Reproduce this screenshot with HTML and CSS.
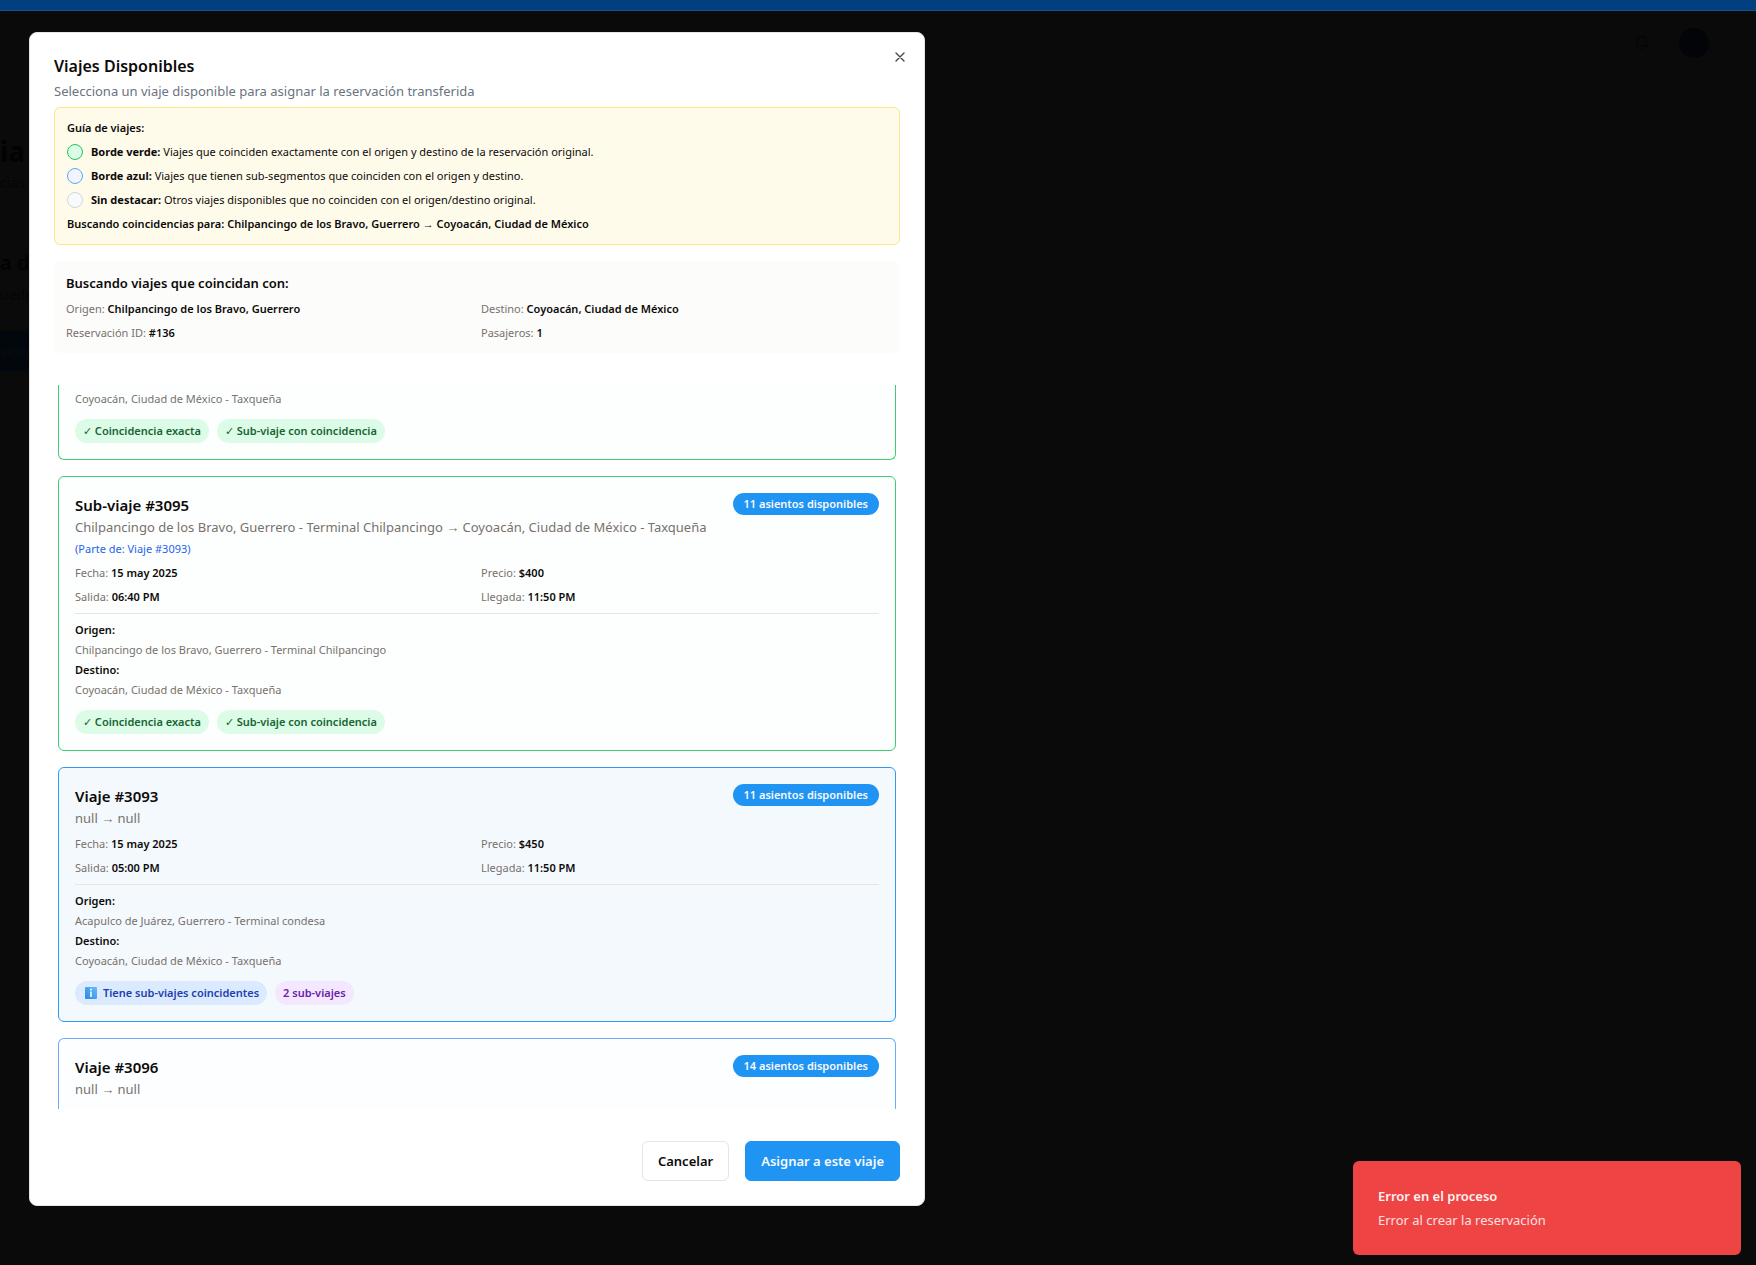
FILE: index.html
```html
<!DOCTYPE html>
<html lang="es">
<head>
<meta charset="utf-8">
<meta name="viewport" content="width=device-width, initial-scale=1">
<title>Viajes Disponibles</title>
<link rel="stylesheet" href="styles.css">
</head>
<body>
<div class="page">
  <div class="topbar"></div>
  <header class="page-header">
    <svg class="bell" viewBox="0 0 24 24" width="16" height="16" aria-hidden="true"><path d="M6 8a6 6 0 0 1 12 0c0 7 3 9 3 9H3s3-2 3-9M10.300 21a1.940 1.940 0 0 0 3.400 0"/></svg>
    <span class="avatar"></span>
  </header>
  <main class="page-main">
    <h1 class="page-title">ia</h1>
    <p class="page-text">cias</p>
    <section class="page-section">
      <h2 class="page-subtitle">a de</h2>
      <p class="page-text">uede</p>
      <button class="page-button" type="button">sajero</button>
    </section>
  </main>
</div>

<div class="overlay">
  <div class="dialog" role="dialog" aria-modal="true" aria-labelledby="dialog-title">
    <button class="dialog-close" type="button" aria-label="Cerrar">
      <svg viewBox="0 0 24 24" width="16" height="16" aria-hidden="true"><path d="M18 6 6 18M6 6l12 12"/></svg>
    </button>
    <header class="dialog-header">
      <h2 class="dialog-title" id="dialog-title">Viajes Disponibles</h2>
      <p class="dialog-description">Selecciona un viaje disponible para asignar la reservación transferida</p>
      <div class="guide">
        <p class="medium">Guía de viajes:</p>
        <p class="guide-row"><span class="dot dot-green"></span><span><strong>Borde verde:</strong> Viajes que coinciden exactamente con el origen y destino de la reservación original.</span></p>
        <p class="guide-row"><span class="dot dot-blue"></span><span><strong>Borde azul:</strong> Viajes que tienen sub-segmentos que coinciden con el origen y destino.</span></p>
        <p class="guide-row"><span class="dot dot-gray"></span><span><strong>Sin destacar:</strong> Otros viajes disponibles que no coinciden con el origen/destino original.</span></p>
        <p class="medium">Buscando coincidencias para: Chilpancingo de los Bravo, Guerrero <span class="arrow">→</span> Coyoacán, Ciudad de México</p>
      </div>
    </header>

    <section class="search">
      <h3 class="search-title">Buscando viajes que coincidan con:</h3>
      <div class="facts">
        <p>Origen: <b>Chilpancingo de los Bravo, Guerrero</b></p>
        <p>Destino: <b>Coyoacán, Ciudad de México</b></p>
        <p>Reservación ID: <b>#136</b></p>
        <p>Pasajeros: <b>1</b></p>
      </div>
    </section>

    <div class="trips">
      <article class="trip trip-exact trip-cut-top">
        <p class="stop-name">Coyoacán, Ciudad de México - Taxqueña</p>
        <div class="tags">
          <span class="tag tag-green"><span class="check">✓</span> Coincidencia exacta</span>
          <span class="tag tag-green"><span class="check">✓</span> Sub-viaje con coincidencia</span>
        </div>
      </article>

      <article class="trip trip-exact">
        <div class="trip-head">
          <div>
            <h3 class="trip-title">Sub-viaje #3095</h3>
            <p class="trip-route">Chilpancingo de los Bravo, Guerrero - Terminal Chilpancingo <span class="arrow">→</span> Coyoacán, Ciudad de México - Taxqueña</p>
            <p class="trip-parent">(Parte de: Viaje #3093)</p>
          </div>
          <span class="seats">11 asientos disponibles</span>
        </div>
        <div class="facts">
          <p>Fecha: <b>15 may 2025</b></p>
          <p>Precio: <b>$400</b></p>
          <p>Salida: <b>06:40 PM</b></p>
          <p>Llegada: <b>11:50 PM</b></p>
        </div>
        <div class="stops">
          <p class="medium">Origen:</p>
          <p class="stop-name">Chilpancingo de los Bravo, Guerrero - Terminal Chilpancingo</p>
          <p class="medium">Destino:</p>
          <p class="stop-name">Coyoacán, Ciudad de México - Taxqueña</p>
        </div>
        <div class="tags">
          <span class="tag tag-green"><span class="check">✓</span> Coincidencia exacta</span>
          <span class="tag tag-green"><span class="check">✓</span> Sub-viaje con coincidencia</span>
        </div>
      </article>

      <article class="trip trip-selected">
        <div class="trip-head">
          <div>
            <h3 class="trip-title">Viaje #3093</h3>
            <p class="trip-route">null <span class="arrow">→</span> null</p>
          </div>
          <span class="seats">11 asientos disponibles</span>
        </div>
        <div class="facts">
          <p>Fecha: <b>15 may 2025</b></p>
          <p>Precio: <b>$450</b></p>
          <p>Salida: <b>05:00 PM</b></p>
          <p>Llegada: <b>11:50 PM</b></p>
        </div>
        <div class="stops">
          <p class="medium">Origen:</p>
          <p class="stop-name">Acapulco de Juárez, Guerrero - Terminal condesa</p>
          <p class="medium">Destino:</p>
          <p class="stop-name">Coyoacán, Ciudad de México - Taxqueña</p>
        </div>
        <div class="tags">
          <span class="tag tag-blue"><svg class="info" viewBox="0 0 12 12" width="12" height="12" aria-hidden="true"><defs><linearGradient id="info-fill" x1="0" y1="1" x2="1" y2="0"><stop offset="0" stop-color="#2f86e4"/><stop offset="1" stop-color="#63bdfb"/></linearGradient></defs><rect width="12" height="12" rx="1" fill="url(#info-fill)"/><circle cx="6" cy="2.500" r="1" fill="#fff"/><path d="M6 4.500v5.500" stroke="#fff" stroke-width="1.500"/></svg>Tiene sub-viajes coincidentes</span>
          <span class="tag tag-purple">2 sub-viajes</span>
        </div>
      </article>

      <article class="trip trip-partial trip-cut-bottom">
        <div class="trip-head">
          <div>
            <h3 class="trip-title">Viaje #3096</h3>
            <p class="trip-route">null <span class="arrow">→</span> null</p>
          </div>
          <span class="seats">14 asientos disponibles</span>
        </div>
      </article>
    </div>

    <footer class="dialog-footer">
      <button class="button button-outline" type="button">Cancelar</button>
      <button class="button button-primary" type="button">Asignar a este viaje</button>
    </footer>
  </div>
</div>

<div class="toast" role="alert">
  <p class="toast-title">Error en el proceso</p>
  <p class="toast-text">Error al crear la reservación</p>
</div>
</body>
</html>
```

FILE: styles.css
```css
* { box-sizing: border-box; }

body, h1, h2, h3, p { margin: 0; }

body {
  min-height: 100vh;
  overflow: hidden;
  background: #0a0a0a;
  color: #0c0a09;
  font: 400 11px/16px "Noto Sans", "Open Sans", sans-serif;
}

button { font-family: inherit; cursor: pointer; }

/* Dimmed page behind the dialog */
.page { color: #020202; }
.topbar { height: 11px; background: #004080; border-bottom: 1px solid #17508c; }
.page-header {
  display: flex;
  justify-content: flex-end;
  align-items: center;
  gap: 29px;
  height: 64px;
  padding-right: 47px;
}
.bell { fill: none; stroke: #050505; stroke-width: 2; }
.avatar { width: 30px; height: 30px; border-radius: 50%; background: #020407; }
.page-main { padding-top: 56px; }
.page-title { font-size: 28px; line-height: 40px; font-weight: 700; }
.page-text { font-size: 14px; line-height: 24px; color: #050505; }
.page-section { margin-top: 32px; padding-top: 16px; }
.page-subtitle { font-size: 20px; line-height: 40px; font-weight: 600; }
.page-button {
  display: block;
  height: 40px;
  margin-top: 24px;
  padding: 0 24px 0 0;
  border: 0;
  background: #01070d;
  color: #090a0b;
  font-size: 13px;
  font-weight: 600;
}

/* Dialog */
.overlay {
  position: fixed;
  inset: 0;
  padding: 32px 29px;
}
.dialog {
  position: relative;
  display: flex;
  flex-direction: column;
  max-width: 896px;
  padding: 24px;
  border: 1px solid #e7e5e4;
  border-radius: 8px;
  background: #fff;
}
.dialog-close {
  position: absolute;
  top: 16px;
  right: 16px;
  display: flex;
  padding: 0;
  border: 0;
  background: none;
}
.dialog-close svg { fill: none; stroke: #484746; stroke-width: 2; stroke-linecap: round; }
.dialog-header { display: flex; flex-direction: column; gap: 6px; }
.dialog-title { font-size: 16px; line-height: 18px; font-weight: 600; }
.dialog-description { font-size: 13px; line-height: 20px; color: #6b7280; }

.medium, b { font-weight: 600; color: #0c0a09; }
strong { font-weight: 700; }
.arrow { font-family: "Liberation Sans", sans-serif; font-weight: 400; line-height: 1; }

.guide {
  display: flex;
  flex-direction: column;
  gap: 8px;
  padding: 12px;
  border: 1px solid #fde68a;
  border-radius: 6px;
  background: #fffbeb;
}
.guide-row { display: flex; gap: 8px; }
.dot { flex: none; width: 16px; height: 16px; border: 1px solid; border-radius: 50%; }
.dot-green { border-color: #22c55e; background: #dcfce7; }
.dot-blue { border-color: #60a5fa; background: #eff6ff; }
.dot-gray { border-color: #d1d5db; background: #f9fafb; }

.search { margin-top: 16px; padding: 12px; border-radius: 6px; background: #fcfcfb; }
.search-title { margin-bottom: 8px; font-size: 13px; line-height: 20px; font-weight: 600; }
.facts { display: grid; grid-template-columns: 1fr 1fr; gap: 8px; color: #78716c; }

/* Trip list */
.trips {
  display: flex;
  flex-direction: column;
  gap: 16px;
  margin-top: 32px;
  padding: 0 4px;
}
.trip { padding: 16px; border: 1px solid; border-radius: 6px; }
.trip-exact { border-color: #3fcd74; background: #fdfffe; }
.trip-selected { border-color: #2f9bf4; background: #f4f9fe; }
.trip-partial { border-color: #6cacfa; background: #fdfeff; }
.trip-cut-top { padding-top: 6px; border-top: 0; border-top-left-radius: 0; border-top-right-radius: 0; }
.trip-cut-bottom { padding-bottom: 10px; border-bottom: 0; border-bottom-left-radius: 0; border-bottom-right-radius: 0; }
.trip-head { display: flex; justify-content: space-between; align-items: flex-start; }
.trip-title { font-size: 15px; line-height: 24px; font-weight: 600; }
.trip-route { font-size: 13px; line-height: 20px; color: #78716c; }
.trip-parent { margin-top: 4px; color: #2563eb; }
.seats {
  flex: none;
  padding: 3px 11px;
  border-radius: 11px;
  background: #2094f3;
  color: #f8fafc;
  font-weight: 600;
}
.trip .facts { margin-top: 8px; }
.stops {
  display: flex;
  flex-direction: column;
  gap: 4px;
  margin-top: 8px;
  padding-top: 8px;
  border-top: 1px solid #e7e5e4;
}
.stop-name { color: #78716c; }
.tags { display: flex; gap: 8px; margin-top: 12px; }
.tag { display: flex; align-items: center; padding: 4px 8px; border-radius: 12px; font-weight: 600; white-space: pre; }
.check { font-weight: 400; }
.tag-green { background: #dcfce7; color: #166534; }
.tag-blue { background: #dbeafe; color: #1e40af; }
.tag-purple { background: #f3e8ff; color: #6b21a8; }
.info { margin: 0 6px 0 2px; }

.dialog-footer { display: flex; justify-content: flex-end; gap: 16px; margin-top: 32px; }
.button { height: 40px; padding: 0 15px; border: 1px solid; border-radius: 6px; font-size: 13px; font-weight: 600; }
.button-outline { border-color: #e7e5e4; background: #fff; color: #0c0a09; }
.button-primary { border-color: #2094f3; background: #2094f3; color: #f8fafc; }

/* Error notice */
.toast {
  position: fixed;
  right: 15px;
  bottom: 10px;
  display: flex;
  flex-direction: column;
  gap: 4px;
  width: 388px;
  padding: 25px;
  border-radius: 6px;
  background: #ef4444;
  color: #fef2f2;
  font-size: 13px;
  line-height: 20px;
}
.toast-title { font-weight: 600; }
.toast-text { opacity: 0.900; }
```
